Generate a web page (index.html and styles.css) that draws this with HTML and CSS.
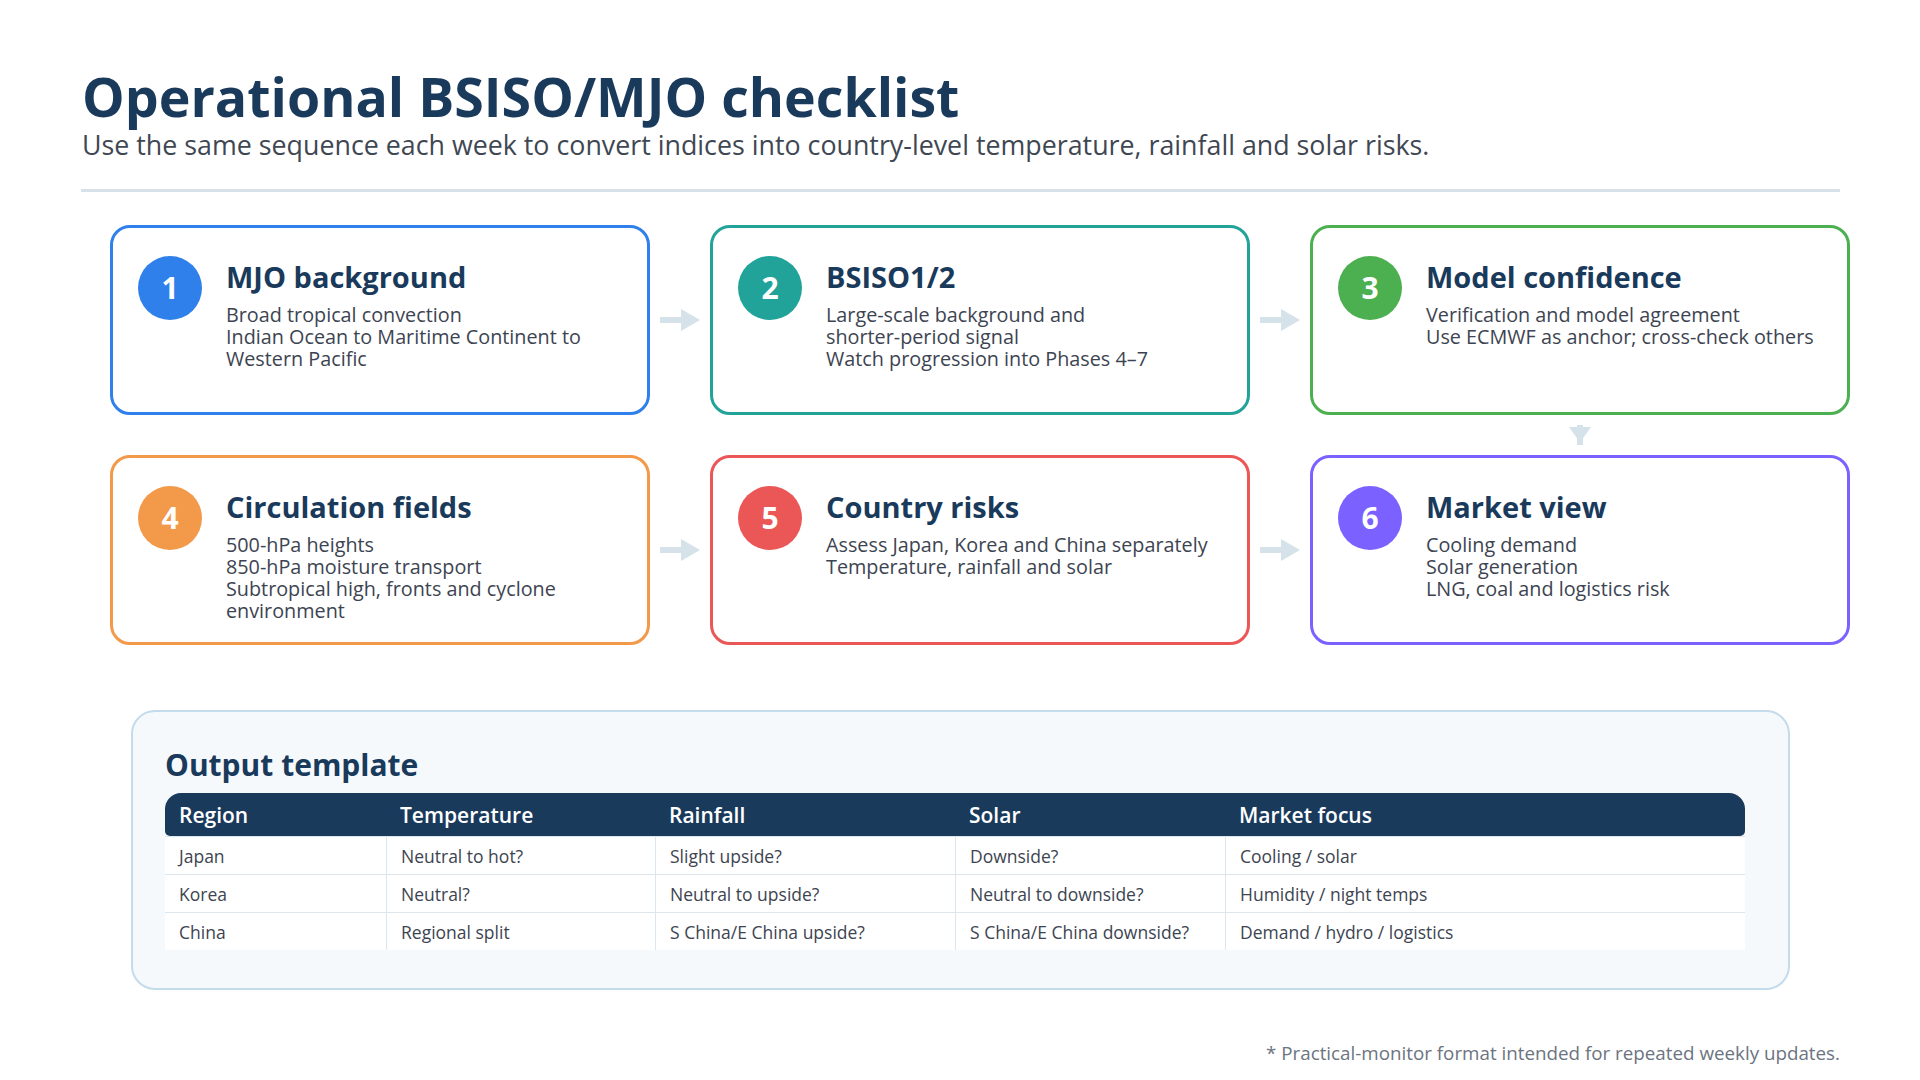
FILE: index.html
```html
<!DOCTYPE html>
<html lang="en">
<head>
<meta charset="utf-8">
<title>Operational BSISO/MJO checklist</title>
<link rel="stylesheet" href="styles.css">
</head>
<body>
<div class="page">
  <header class="head">
    <h1 class="title">Operational BSISO/MJO checklist</h1>
    <p class="subtitle">Use the same sequence each week to convert indices into country-level temperature, rainfall and solar risks.</p>
  </header>
  <div class="rule"></div>

  <div class="flow">
    <div class="card c-blue">
      <div class="badge">1</div>
      <div class="card-body">
        <h2 class="card-title">MJO background</h2>
        <div class="card-lines">
          <div>Broad tropical convection</div>
          <div>Indian Ocean to Maritime Continent to Western Pacific</div>
        </div>
      </div>
    </div>
    <svg class="arrow-r" width="40" height="22" viewBox="0 0 40 22"><path d="M0 8h21V0l19 11-19 11v-8H0z"/></svg>
    <div class="card c-teal">
      <div class="badge">2</div>
      <div class="card-body">
        <h2 class="card-title">BSISO1/2</h2>
        <div class="card-lines">
          <div>Large-scale background and <span class="nobr">shorter-period</span> signal</div>
          <div>Watch progression into Phases 4–7</div>
        </div>
      </div>
    </div>
    <svg class="arrow-r" width="40" height="22" viewBox="0 0 40 22"><path d="M0 8h21V0l19 11-19 11v-8H0z"/></svg>
    <div class="card c-green">
      <div class="badge">3</div>
      <div class="card-body">
        <h2 class="card-title">Model confidence</h2>
        <div class="card-lines">
          <div>Verification and model agreement</div>
          <div>Use ECMWF as anchor; <span class="nobr">cross-check</span> others</div>
        </div>
      </div>
    </div>

    <svg class="arrow-d" width="22" height="20" viewBox="0 0 22 20"><path d="M8 0h6v20H8z"/><path d="M0 2h22L11 17.5z"/></svg>

    <div class="card c-orange">
      <div class="badge">4</div>
      <div class="card-body">
        <h2 class="card-title">Circulation fields</h2>
        <div class="card-lines">
          <div>500-hPa heights</div>
          <div>850-hPa moisture transport</div>
          <div>Subtropical high, fronts and cyclone environment</div>
        </div>
      </div>
    </div>
    <svg class="arrow-r" width="40" height="22" viewBox="0 0 40 22"><path d="M0 8h21V0l19 11-19 11v-8H0z"/></svg>
    <div class="card c-red">
      <div class="badge">5</div>
      <div class="card-body">
        <h2 class="card-title">Country risks</h2>
        <div class="card-lines">
          <div>Assess Japan, Korea and China separately</div>
          <div>Temperature, rainfall and solar</div>
        </div>
      </div>
    </div>
    <svg class="arrow-r" width="40" height="22" viewBox="0 0 40 22"><path d="M0 8h21V0l19 11-19 11v-8H0z"/></svg>
    <div class="card c-purple">
      <div class="badge">6</div>
      <div class="card-body">
        <h2 class="card-title">Market view</h2>
        <div class="card-lines">
          <div>Cooling demand</div>
          <div>Solar generation</div>
          <div>LNG, coal and logistics risk</div>
        </div>
      </div>
    </div>
  </div>

  <section class="template">
    <h2 class="tpl-title">Output template</h2>
    <table class="tpl-table">
      <colgroup>
        <col class="w1"><col class="w2"><col class="w3"><col class="w4"><col class="w5">
      </colgroup>
      <thead>
        <tr><th>Region</th><th>Temperature</th><th>Rainfall</th><th>Solar</th><th>Market focus</th></tr>
      </thead>
      <tbody>
        <tr><td>Japan</td><td>Neutral to hot?</td><td>Slight upside?</td><td>Downside?</td><td>Cooling / solar</td></tr>
        <tr><td>Korea</td><td>Neutral?</td><td>Neutral to upside?</td><td>Neutral to downside?</td><td>Humidity / night temps</td></tr>
        <tr><td>China</td><td>Regional split</td><td>S China/E China upside?</td><td>S China/E China downside?</td><td>Demand / hydro / logistics</td></tr>
      </tbody>
    </table>
  </section>

  <p class="note">* Practical-monitor format intended for repeated weekly updates.</p>
</div>
</body>
</html>
```

FILE: styles.css
```css
html, body {
  margin: 0;
  padding: 0;
  background: #ffffff;
}

body {
  font-family: "Open Sans", "Noto Sans", "Liberation Sans", sans-serif;
  color: #3d4451;
}

.page {
  width: 1920px;
  height: 1080px;
  overflow: hidden;
}

.head {
  padding: 67px 0 0 82px;
}

.title {
  margin: 0;
  font-size: 53.7px;
  line-height: 60px;
  font-weight: 700;
  color: #1a3a5c;
}

.subtitle {
  margin: 3px 0 0;
  font-size: 26.8px;
  line-height: 30px;
  color: #3f4753;
}

.rule {
  margin: 29px 80px 0 81px;
  height: 3px;
  background: #d6e1ea;
}

.flow {
  display: grid;
  grid-template-columns: 540px 60px 540px 60px 540px;
  grid-template-rows: 190px 40px 190px;
  margin: 33px 0 0 110px;
}

.card {
  box-sizing: border-box;
  border: 3px solid;
  border-radius: 20px;
  padding: 28px 26px 0 25px;
  display: flex;
  gap: 24px;
  background: #ffffff;
}

.badge {
  flex: none;
  width: 64px;
  height: 64px;
  border-radius: 50%;
  display: flex;
  align-items: center;
  justify-content: center;
  color: #ffffff;
  font-weight: 700;
  font-size: 30px;
  line-height: 1;
}

.card-body {
  min-width: 0;
  flex: 1;
}

.card-title {
  margin: 3px 0 0;
  font-size: 29px;
  line-height: 36px;
  font-weight: 700;
  color: #1a3a5c;
}

.card-lines {
  margin-top: 9px;
  font-size: 19.8px;
  line-height: 22px;
  color: #3d4451;
}

.nobr {
  white-space: nowrap;
}

.c-blue { border-color: #2f80ea; }
.c-blue .badge { background: #2f80ea; }
.c-teal { border-color: #22a39a; }
.c-teal .badge { background: #22a39a; }
.c-green { border-color: #4caf50; }
.c-green .badge { background: #4caf50; }
.c-orange { border-color: #f2994a; }
.c-orange .badge { background: #f2994a; }
.c-red { border-color: #eb5757; }
.c-red .badge { background: #eb5757; }
.c-purple { border-color: #7b61ff; }
.c-purple .badge { background: #7b61ff; }

.arrow-r,
.arrow-d {
  align-self: center;
  justify-self: center;
  fill: #d5e2ea;
}

.arrow-d {
  grid-column: 5;
}

.template {
  box-sizing: border-box;
  width: 1659px;
  height: 280px;
  margin: 65px 0 0 131px;
  padding: 35px 0 0 32px;
  background: #f5f9fc;
  border: 2px solid #c3dbea;
  border-radius: 24px;
}

.tpl-title {
  margin: 0 0 10px;
  font-size: 30px;
  line-height: 36px;
  font-weight: 700;
  color: #1a3a5c;
}

.tpl-table {
  width: 1580px;
  table-layout: fixed;
  border-collapse: separate;
  border-spacing: 0;
}

.w1 { width: 221px; }
.w2 { width: 269px; }
.w3 { width: 300px; }
.w4 { width: 270px; }
.w5 { width: 520px; }

.tpl-table th {
  background: #1a3a5c;
  color: #ffffff;
  font-weight: 600;
  font-size: 21px;
  line-height: 42px;
  padding: 1px 14px 0;
  text-align: left;
  white-space: nowrap;
}

.tpl-table th:first-child {
  border-top-left-radius: 16px;
  border-bottom-left-radius: 5px;
}

.tpl-table th:last-child {
  border-top-right-radius: 16px;
  border-bottom-right-radius: 5px;
}

.tpl-table td {
  background: #ffffff;
  font-size: 17.5px;
  line-height: 35px;
  padding: 2px 14px 0;
  color: #3d4451;
  border-top: 1px solid #dbe6ee;
  white-space: nowrap;
}

.tpl-table td + td {
  border-left: 1px solid #dbe6ee;
}

.note {
  margin: 51px 80px 0 0;
  text-align: right;
  font-size: 18.8px;
  line-height: 24px;
  color: #6b7480;
}
```
